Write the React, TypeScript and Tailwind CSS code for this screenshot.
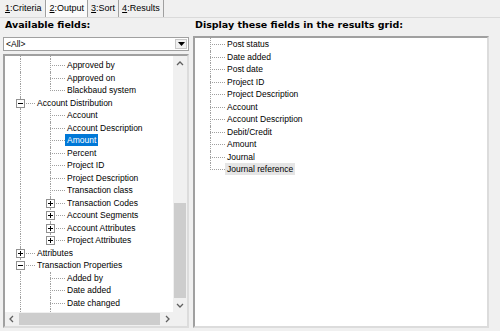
import React from "react"

type Row = {
  text?: string
  guides: boolean[]
  last?: boolean
  exp?: "+" | "-"
  sel?: boolean
  hover?: boolean
  spacer?: boolean
}

const leftRows: Row[] = [
  { spacer: true, guides: [true, true] },
  { text: "Approved by", guides: [true] },
  { text: "Approved on", guides: [true] },
  { text: "Blackbaud system", guides: [true], last: true },
  { text: "Account Distribution", guides: [], exp: "-" },
  { text: "Account", guides: [true] },
  { text: "Account Description", guides: [true] },
  { text: "Amount", guides: [true], sel: true },
  { text: "Percent", guides: [true] },
  { text: "Project ID", guides: [true] },
  { text: "Project Description", guides: [true] },
  { text: "Transaction class", guides: [true] },
  { text: "Transaction Codes", guides: [true], exp: "+" },
  { text: "Account Segments", guides: [true], exp: "+" },
  { text: "Account Attributes", guides: [true], exp: "+" },
  { text: "Project Attributes", guides: [true], exp: "+", last: true },
  { text: "Attributes", guides: [], exp: "+" },
  { text: "Transaction Properties", guides: [], exp: "-" },
  { text: "Added by", guides: [true] },
  { text: "Date added", guides: [true] },
  { text: "Date changed", guides: [true] },
  { text: "Last ID", guides: [true] },
]

const rightFields = [
  "Post status",
  "Date added",
  "Post date",
  "Project ID",
  "Project Description",
  "Account",
  "Account Description",
  "Debit/Credit",
  "Amount",
  "Journal",
  "Journal reference",
]

function Expander({ kind }: { kind: "+" | "-" }) {
  return (
    <span className="absolute left-[11px] top-[2px] w-[9px] h-[9px] border border-[#919191] bg-white">
      <span className="absolute left-[1px] top-[3px] w-[5px] h-[1px] bg-black" />
      {kind === "+" && <span className="absolute left-[3px] top-[1px] w-[1px] h-[5px] bg-black" />}
    </span>
  )
}

function TreeRow({ row }: { row: Row }) {
  if (row.spacer) {
    return (
      <div className="flex h-[3px]">
        {row.guides.map((g, i) => (
          <div key={i} className="relative w-[30px] h-full shrink-0">
            {g && <span className="absolute left-[15px] top-0 bottom-0 border-l border-dotted border-[#a0a0a0]" />}
          </div>
        ))}
      </div>
    )
  }
  return (
    <div className="flex h-[12.5px] items-center">
      {row.guides.map((g, i) => (
        <div key={i} className="relative w-[30px] h-full shrink-0">
          {g && <span className="absolute left-[15px] top-0 bottom-0 border-l border-dotted border-[#a0a0a0]" />}
        </div>
      ))}
      <div className="relative w-[30px] h-full shrink-0">
        <span
          className={`absolute left-[15px] top-0 border-l border-dotted border-[#a0a0a0] ${row.last ? "h-[7px]" : "bottom-0"}`}
        />
        <span className="absolute left-[15px] right-0 top-[6px] border-t border-dotted border-[#a0a0a0]" />
        {row.exp && <Expander kind={row.exp} />}
      </div>
      <span
        className={`px-[2px] h-[12px] leading-[12px] whitespace-nowrap ${
          row.sel ? "bg-[#0078d7] text-white" : row.hover ? "bg-[#e5e5e5]" : ""
        }`}
      >
        {row.text}
      </span>
    </div>
  )
}

function Chevron({ dir }: { dir: "up" | "down" | "left" | "right" }) {
  const pts = {
    up: "1,5 4,2 7,5",
    down: "1,3 4,6 7,3",
    left: "5,1 2,4 5,7",
    right: "3,1 6,4 3,7",
  }[dir]
  return (
    <svg width="8" height="8" viewBox="0 0 8 8">
      <polyline points={pts} fill="none" stroke="#606060" strokeWidth="1.3" />
    </svg>
  )
}

const tabs = [
  { k: "1", rest: ":Criteria" },
  { k: "2", rest: ":Output", active: true },
  { k: "3", rest: ":Sort" },
  { k: "4", rest: ":Results" },
]

export default function App() {
  return (
    <div className="w-[500px] h-[331px] overflow-hidden bg-[#f0f0f0] text-black font-['Liberation_Sans',Arial,sans-serif] flex flex-col">
      {/* Tabs */}
      <div className="flex h-[18px] shrink-0 border-b border-[#dadada] pl-[2px] text-[9px]">
        {tabs.map((t) => (
          <div
            key={t.k}
            className={`flex items-center px-[3px] border-r border-[#a0a0a0] ${
              t.active ? "bg-[#fafafa] border-l border-l-white" : ""
            }`}
          >
            <span className="underline underline-offset-1">{t.k}</span>
            <span>{t.rest}</span>
          </div>
        ))}
      </div>

      <div className="flex flex-1 min-h-0 pl-[3px] pr-[11px] pb-[3px]">
        {/* Left column */}
        <div className="flex flex-col w-[186px] shrink-0">
          <div className="h-[15px] flex items-center pl-[2px] text-[9.5px] font-bold font-['DejaVu_Sans',Verdana,sans-serif]">
            Available fields:
          </div>
          <div className="mt-[4px] h-[14px] flex bg-white border border-[#a0a0a0] text-[8.5px]">
            <div className="flex-1 flex items-center pl-[2px]">&lt;All&gt;</div>
            <div className="w-[12px] my-[1px] mr-[1px] bg-[#f0f0f0] border border-[#c8c8c8] flex items-center justify-center">
              <svg width="7" height="4" viewBox="0 0 7 4">
                <polygon points="0,0 7,0 3.5,4" fill="#000" />
              </svg>
            </div>
          </div>
          <div className="mt-[3px] flex-1 min-h-0 flex flex-col border-2 border-t-[#a0a0a0] border-l-[#a0a0a0] border-r-[#dcdcdc] border-b-[#dcdcdc] bg-white">
            <div className="flex flex-1 min-h-0">
              <div className="flex-1 overflow-hidden text-[8.5px]">
                {leftRows.map((r, i) => (
                  <TreeRow key={i} row={r} />
                ))}
              </div>
              <div className="w-[14px] flex flex-col bg-[#f0f0f0]">
                <div className="h-[16px] flex items-center justify-center">
                  <Chevron dir="up" />
                </div>
                <div className="flex-1" />
                <div className="h-[95px] mx-[1px] bg-[#cdcdcd]" />
                <div className="h-[14px] flex items-center justify-center">
                  <Chevron dir="down" />
                </div>
              </div>
            </div>
            <div className="h-[14px] flex bg-[#f0f0f0]">
              <div className="w-[14px] flex items-center justify-center">
                <Chevron dir="left" />
              </div>
              <div className="w-[141px] my-[1px] bg-[#cdcdcd]" />
              <div className="flex-1 flex items-center justify-center">
                <Chevron dir="right" />
              </div>
              <div className="w-[14px]" />
            </div>
          </div>
        </div>

        {/* Right column */}
        <div className="flex flex-col flex-1 ml-[4px]">
          <div className="h-[15px] flex items-center pl-[2px] text-[9.5px] font-bold font-['DejaVu_Sans',Verdana,sans-serif]">
            Display these fields in the results grid:
          </div>
          <div className="mt-[3px] flex-1 border-2 border-t-[#a0a0a0] border-l-[#a0a0a0] border-r-[#dcdcdc] border-b-[#dcdcdc] bg-white text-[8.5px]">
            {rightFields.map((f, i) => (
              <TreeRow
                key={f}
                row={{
                  text: f,
                  guides: [],
                  last: i === rightFields.length - 1,
                  hover: i === rightFields.length - 1,
                }}
              />
            ))}
          </div>
        </div>
      </div>
    </div>
  )
}
